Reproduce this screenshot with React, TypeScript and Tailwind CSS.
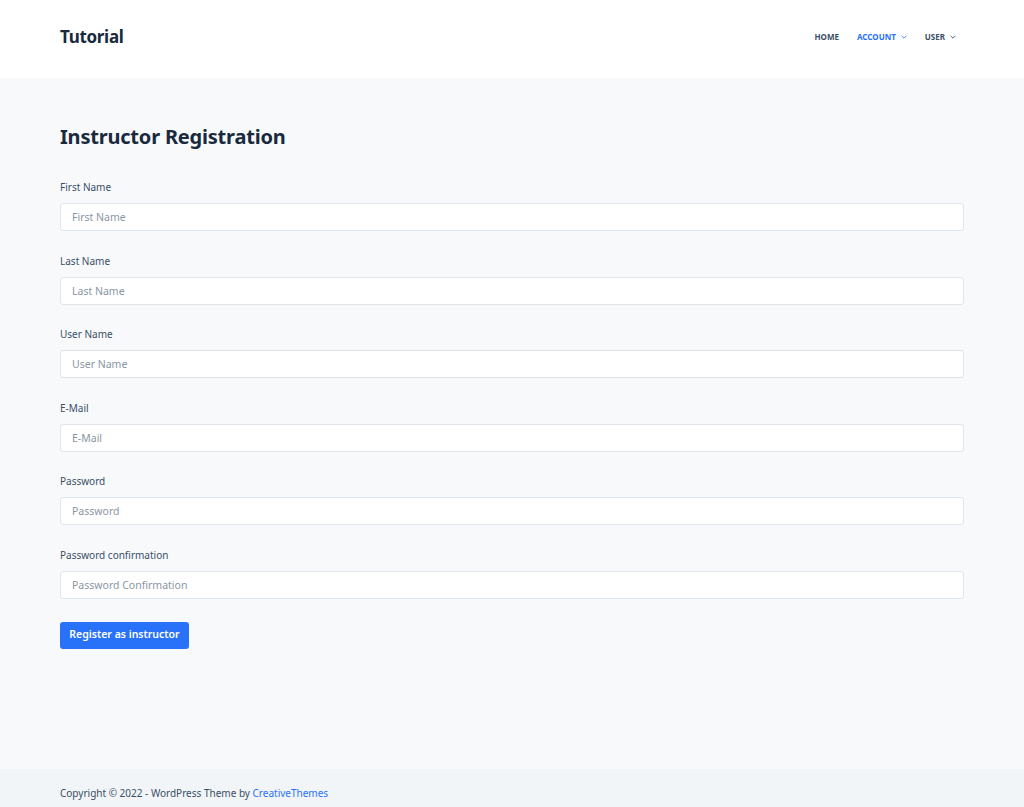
import React from "react";

const fields = [
  { label: "First Name", ph: "First Name" },
  { label: "Last Name", ph: "Last Name" },
  { label: "User Name", ph: "User Name" },
  { label: "E-Mail", ph: "E-Mail" },
  { label: "Password", ph: "Password" },
  { label: "Password confirmation", ph: "Password Confirmation" },
];

function Chevron() {
  return (
    <svg width="6" height="4" viewBox="0 0 10 6" className="ml-[5px] mt-[1px]">
      <path d="M1 1l4 4 4-4" stroke="currentColor" strokeWidth="1.4" fill="none" />
    </svg>
  );
}

export default function App() {
  return (
    <div
      className="min-h-[807px] flex flex-col bg-[#f8f9fb] text-[#3a4f66]"
      style={{ fontFamily: '"Noto Sans", "Open Sans", sans-serif' }}
    >
      <header className="h-[78px] bg-white flex items-center justify-between pl-[60px] pr-[68px] pb-[5px]">
        <div className="text-[17px] font-bold text-[#192a3d] tracking-[-0.3px]">Tutorial</div>
        <nav className="flex items-center gap-[18px] text-[8px] font-bold uppercase">
          <span className="text-[#3a4f66]">Home</span>
          <span className="flex items-center text-[#2872fa]">
            Account
            <Chevron />
          </span>
          <span className="flex items-center text-[#3a4f66]">
            User
            <Chevron />
          </span>
        </nav>
      </header>

      <main className="flex-1 px-[60px] pt-[44px]">
        <h1 className="text-[20px] font-bold text-[#192a3d] leading-[30px] tracking-[-0.2px]">
          Instructor Registration
        </h1>
        <form className="mt-[27px] w-[904px]" onSubmit={(e) => e.preventDefault()}>
          {fields.map((f) => (
            <div key={f.label} className="mb-[21.5px]">
              <label className="block text-[10px] leading-[16px] text-[#3a4f66] mb-[8px]">{f.label}</label>
              <input
                placeholder={f.ph}
                className="block w-full h-[28px] bg-white border border-[#e0e5eb] rounded-[3px] px-[11px] text-[10.5px] placeholder:text-[#8a96a3] outline-none"
              />
            </div>
          ))}
          <button
            type="submit"
            className="mt-[1.5px] h-[27px] w-[129px] rounded-[3px] bg-[#2872fa] text-white text-[10.5px] font-semibold"
          >
            Register as instructor
          </button>
        </form>
      </main>

      <footer className="h-[38px] bg-[#f2f5f7] flex items-start pt-[17px] px-[60px] text-[10px] leading-[14px] text-[#3a4f66]">
        <span>
          Copyright © 2022 - WordPress Theme by <a className="text-[#2872fa]">CreativeThemes</a>
        </span>
      </footer>
    </div>
  );
}
